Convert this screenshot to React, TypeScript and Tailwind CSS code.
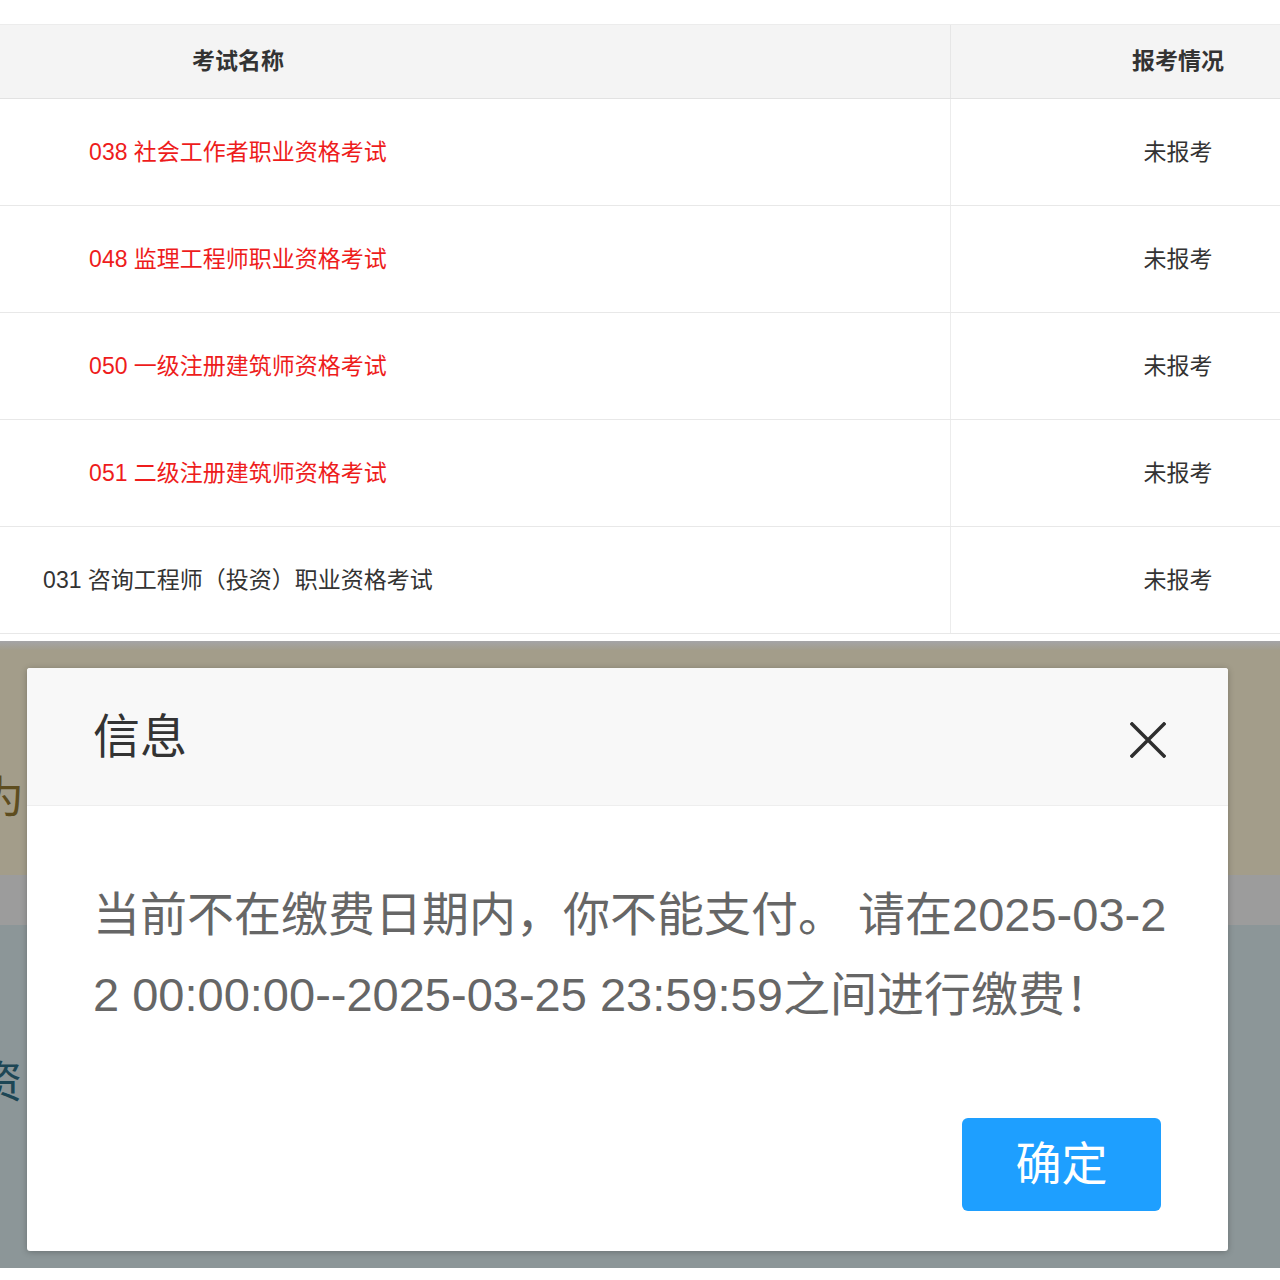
type ExamRow = {
  id: string
  name: string
  status: string
  highlight?: boolean
}

const rows: ExamRow[] = [
  { id: '038', name: '038 社会工作者职业资格考试', status: '未报考', highlight: true },
  { id: '048', name: '048 监理工程师职业资格考试', status: '未报考', highlight: true },
  { id: '050', name: '050 一级注册建筑师资格考试', status: '未报考', highlight: true },
  { id: '051', name: '051 二级注册建筑师资格考试', status: '未报考', highlight: true },
  { id: '031', name: '031 咨询工程师（投资）职业资格考试', status: '未报考' },
]

const font = "font-['Liberation_Sans','Noto_Sans_CJK_SC',sans-serif]"

function ExamTable() {
  return (
    <section className="bg-white pt-[24px] pb-[7px]">
      <div className="border-t border-[#ececec]">
        <div className="grid h-[74px] grid-cols-[950px_330px] border-b border-[#e2e2e2] bg-[#f4f4f4]">
          <div className="flex items-center overflow-hidden">
            <div className="w-[476px] text-center text-[23px] font-bold text-[#333]">考试名称</div>
          </div>
          <div className="flex items-center overflow-hidden border-l border-[#e6e6e6]">
            <div className="w-[454px] shrink-0 text-center text-[23px] font-bold text-[#333]">报考情况</div>
          </div>
        </div>

        {rows.map((row) => (
          <div key={row.id} className="grid h-[107px] grid-cols-[950px_330px] border-b border-[#e8e8e8]">
            <div className="flex items-center overflow-hidden">
              <div
                className={[
                  'w-[476px] text-center text-[23px]',
                  row.highlight ? 'text-[#ee1c1c]' : 'text-[#333]',
                ].join(' ')}
              >
                {row.name}
              </div>
            </div>
            <div className="flex items-center overflow-hidden border-l border-[#ececec]">
              <div className="w-[454px] shrink-0 text-center text-[23px] text-[#333]">{row.status}</div>
            </div>
          </div>
        ))}
      </div>
    </section>
  )
}

function CloseIcon() {
  return (
    <svg width="36" height="36" viewBox="0 0 36 36" className="text-[#2e2e2e]" aria-hidden="true">
      <path d="M2 2 L34 34 M34 2 L2 34" stroke="currentColor" strokeWidth="3.5" strokeLinecap="square" fill="none" />
    </svg>
  )
}

function InfoDialog() {
  return (
    <div className="relative flex h-[583px] flex-col rounded-[3px] bg-white shadow-[0_1px_6px_rgba(0,0,0,0.25)]">
      <div className="flex h-[138px] items-center justify-between rounded-t-[3px] border-b border-[#eee] bg-[#f8f8f8] pl-[66px] pr-[62px]">
        <h2 className="text-[47px] leading-none text-[#333]">信息</h2>
        <div className="mt-[6px]">
          <CloseIcon />
        </div>
      </div>
      <p className="break-all pl-[66px] pr-[56px] pt-[69px] text-[47px] leading-[80px] text-[#666]">
        当前不在缴费日期内，你不能支付。 请在2025-03-22 00:00:00--2025-03-25 23:59:59之间进行缴费！
      </p>
      <div className="mt-auto flex justify-end pb-[40px] pr-[67px]">
        <button className="flex h-[93px] w-[199px] items-center justify-center rounded-[6px] bg-[#1e9fff] text-[46px] text-white">
          确定
        </button>
      </div>
    </div>
  )
}

function Backdrop() {
  return (
    <section className="relative overflow-hidden">
      {/* blurred page behind the layer */}
      <div className="absolute inset-0 flex flex-col">
        <div className="h-[9px] bg-gradient-to-b from-[#a4a4a7] to-[#a29d8c]" />
        <div className="h-[225px] bg-[#a39d8a]" />
        <div className="h-[50px] bg-[#9c9c9c]" />
        <div className="flex-1 bg-[#8c9698]" />
      </div>
      <span className="absolute left-[-20px] top-[135px] text-[44px] leading-none text-[#5e4d1f]">为</span>
      <span className="absolute left-[-22px] top-[420px] text-[44px] leading-none text-[#1d4655]">资</span>

      <div className="relative pb-[17px] pl-[27px] pr-[52px] pt-[27px]">
        <InfoDialog />
      </div>
    </section>
  )
}

export default function App() {
  return (
    <div className={`${font} w-[1280px] bg-white pb-[12px]`}>
      <ExamTable />
      <Backdrop />
    </div>
  )
}
